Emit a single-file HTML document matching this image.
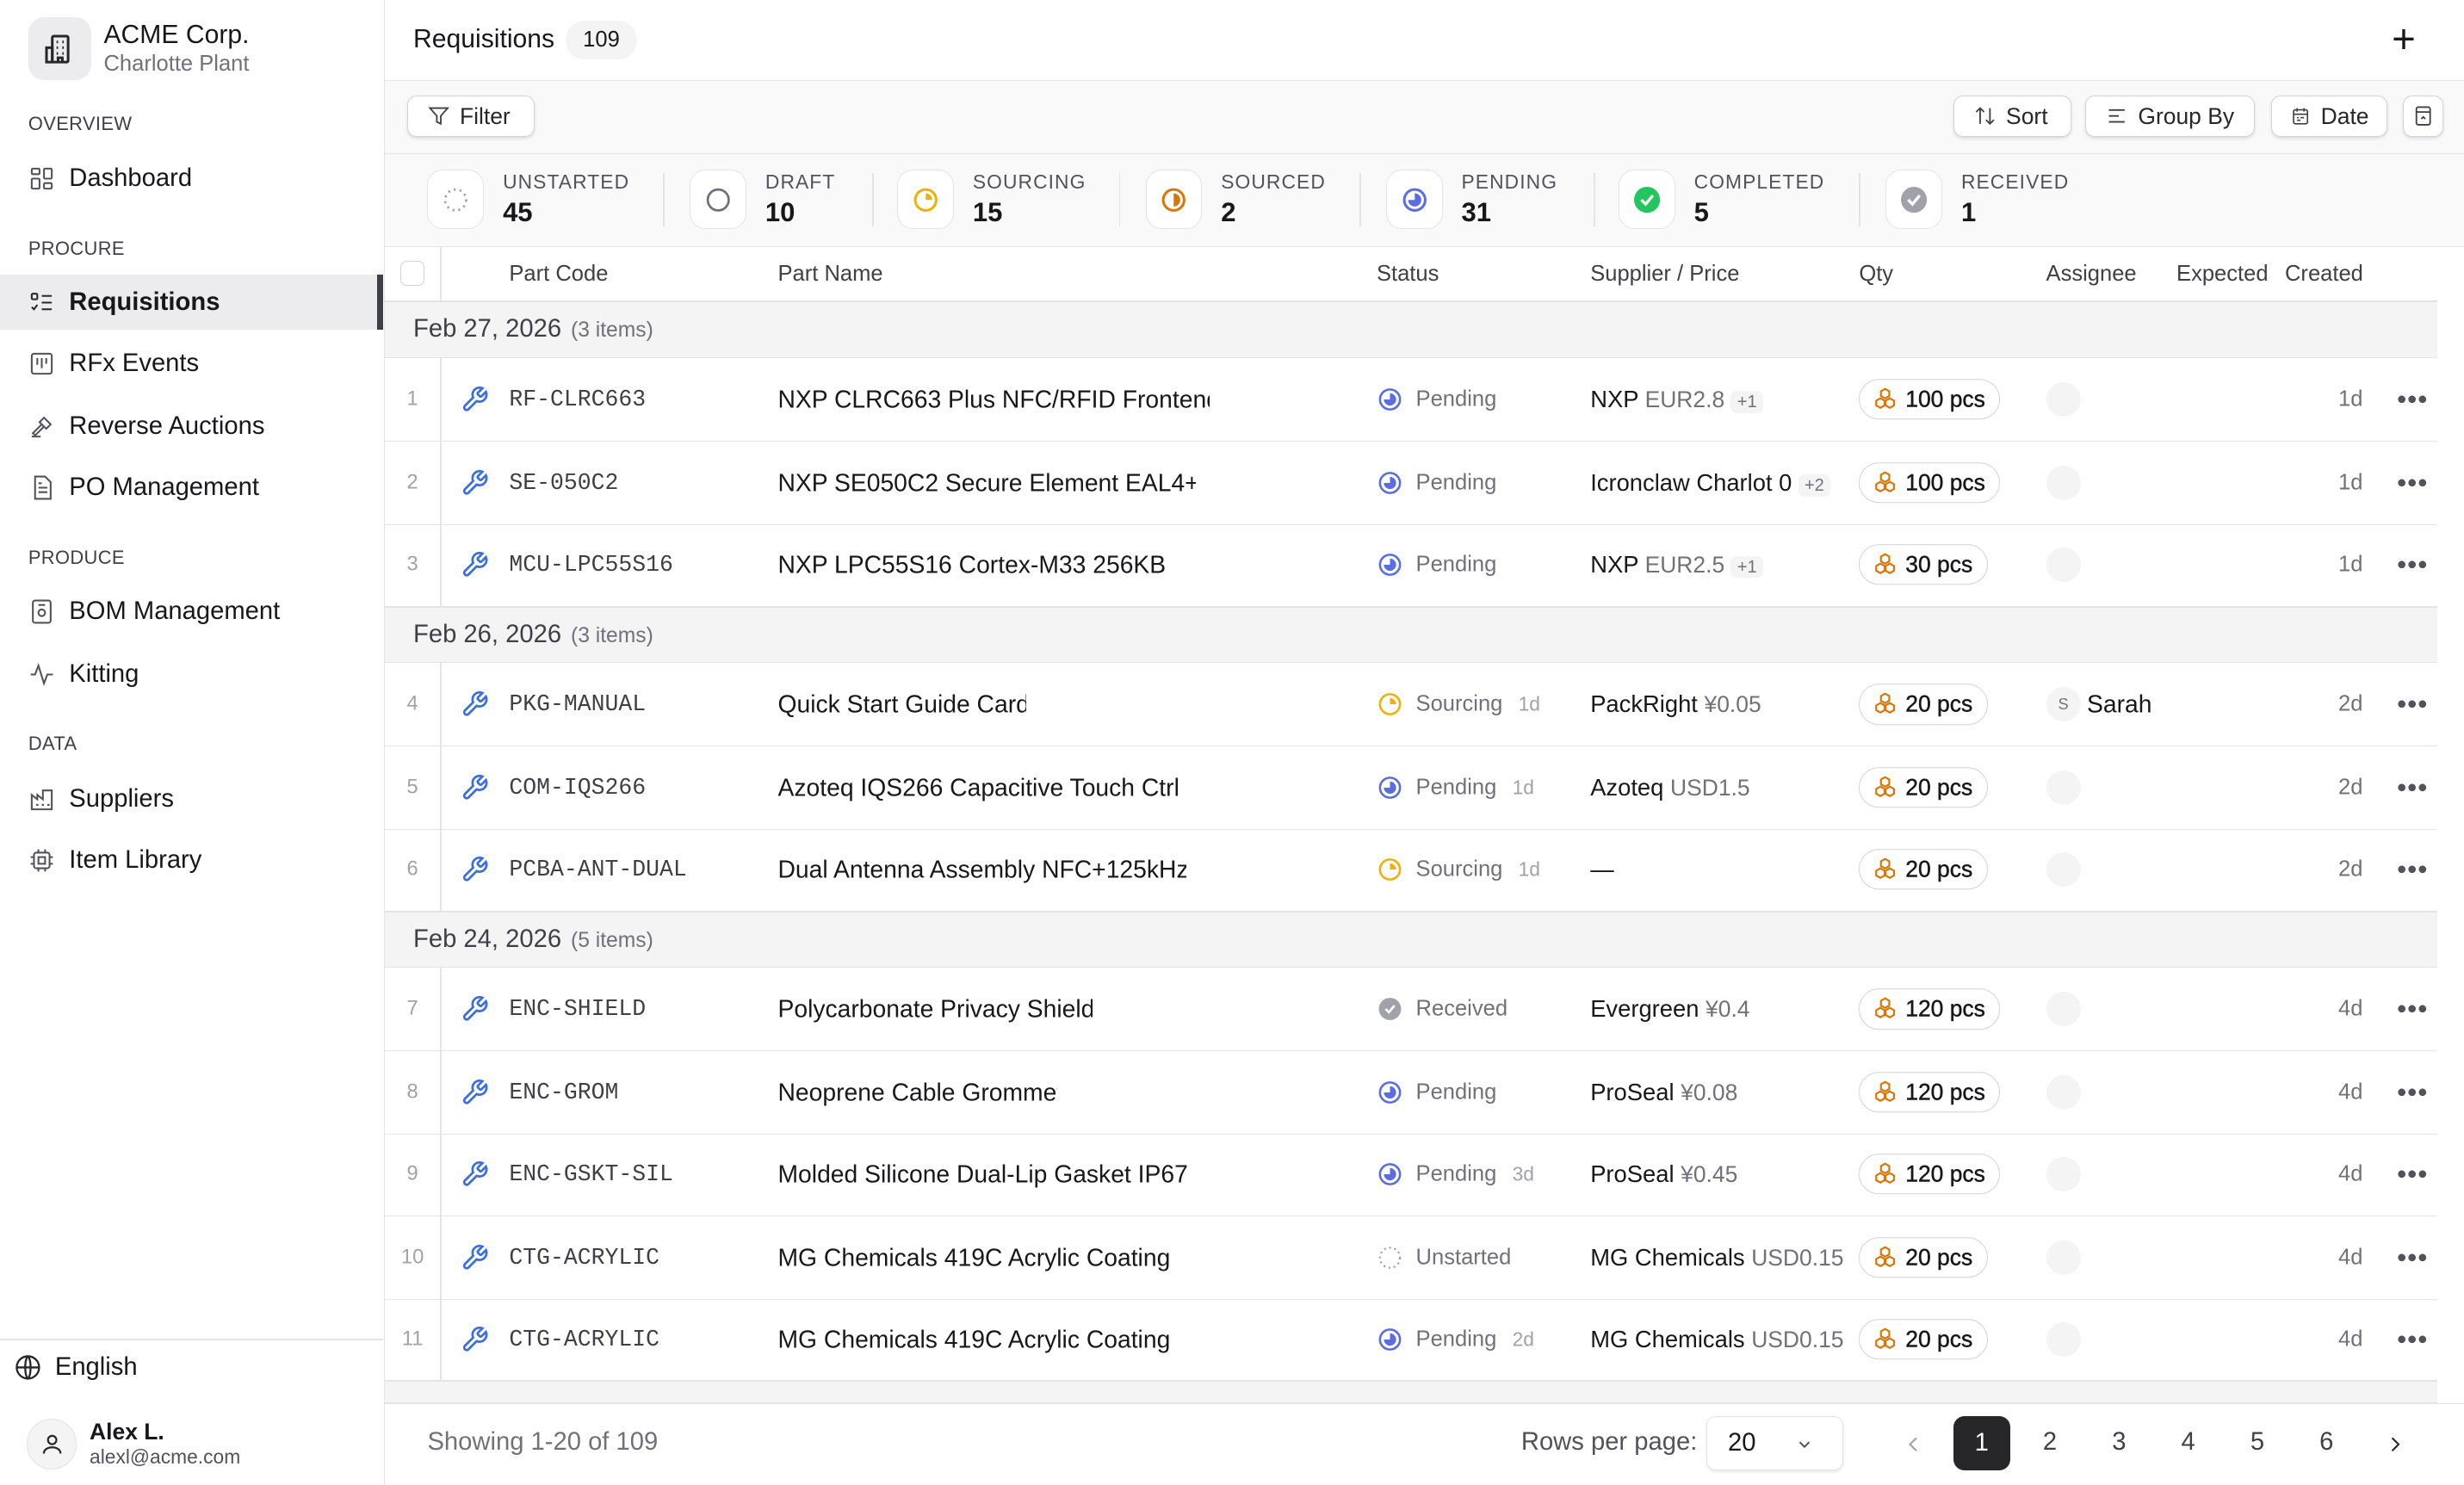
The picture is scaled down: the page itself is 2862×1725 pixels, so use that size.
<!DOCTYPE html>
<html><head><meta charset="utf-8"><style>
html{zoom:1.8253}
*{box-sizing:border-box;margin:0;padding:0}
body{width:1568px;height:945px;overflow:hidden;font-family:"Liberation Sans",sans-serif;color:#18181b;background:#fff;position:relative;font-size:15px}
.a{position:absolute}
.sb{left:0;top:0;width:245px;height:945px;border-right:1px solid #e4e4e7;background:#fff}
.sec{left:18px;font-size:12px;color:#3f3f46;letter-spacing:.2px}
.nav{left:0;width:244px;height:35px;display:flex;align-items:center;padding-left:18px;font-size:16px;color:#18181b}
.nav svg{width:17px;height:17px;margin-right:9px;stroke:#52525b;fill:none;stroke-width:1.6}
.btn{top:61px;height:26px;border:1px solid #d4d4d8;border-radius:6px;background:#fff;box-shadow:0 1px 2px rgba(0,0,0,.12);display:flex;align-items:center;padding:0 11px 0 12px;font-size:14.5px;color:#27272a}
.btn svg{width:15px;height:15px;margin-right:6px;stroke:#3f3f46;fill:none;stroke-width:1.6}
.st{top:108px;display:flex;align-items:center}
.st .ic{width:36px;height:38px;border:1px solid #e4e4e7;border-radius:10px;background:#fff;display:flex;align-items:center;justify-content:center;margin-right:12px}
.st .l{font-size:12.5px;color:#52525b;letter-spacing:.6px}
.st .n{font-size:17px;font-weight:bold;margin-top:2px}
.sep{top:110px;width:1px;height:34px;background:#e4e4e7}
.th{top:157px;height:35px;font-size:14px;color:#3f3f46;line-height:35px}
.grp{left:245px;width:1306px;height:36px;background:#f4f4f5;border-bottom:1px solid #e4e4e7;border-top:1px solid #e4e4e7;font-size:16px;color:#3f3f46;padding-left:18px;line-height:34px}
.grp span{font-size:13.5px;color:#71717a;margin-left:6px}
.row{left:245px;width:1306px;height:53px;border-bottom:1px solid #e4e4e7;font-size:15.5px}
.row>*{position:absolute;top:50%;transform:translateY(-50%);white-space:nowrap}
.idx{left:0;width:35px;text-align:center;font-size:13px;color:#a1a1aa}
.vl{left:35px;top:0!important;transform:none!important;width:1px;height:100%;background:#e4e4e7}
.wr{left:48px}
.pc{left:79px;font-family:"Liberation Mono",monospace;font-size:14.5px;color:#3f3f46}
.pn{left:250px;width:275px;overflow:hidden;color:#18181b}
.ss{left:631px;display:flex;align-items:center;font-size:14px;color:#71717a}
.ss svg{margin-right:8px}
.ss i{font-style:normal;font-size:12.5px;color:#a1a1aa;margin-left:10px}
.sp{left:767px;font-size:15px}
.sp span{color:#71717a;font-size:14.5px}
.sp b{font-weight:normal;font-size:11px;color:#71717a;background:#f4f4f5;border-radius:4px;padding:1px 4px;margin-left:4px}
.qty{left:938px;height:26px;border:1px solid #d4d4d8;border-radius:13px;padding:0 9px 0 8px;display:flex;align-items:center;font-size:14.5px;color:#18181b;-webkit-text-stroke:.25px #18181b}
.qty svg{margin-right:5px}
.av{left:1057px;width:22px;height:22px;border-radius:50%;background:#f4f4f5}
.cr{left:1243px;font-size:14px;color:#71717a}
.dots{left:1280px;font-size:11px;color:#52525b;letter-spacing:0}
.pg{top:909px;font-size:16px;color:#3f3f46}
</style></head><body>

<div class="a sb">
 <div class="a" style="left:18px;top:11px;width:40px;height:40px;border-radius:10px;background:#ececee;display:flex;align-items:center;justify-content:center">
  <svg width="22" height="22" viewBox="0 0 24 24" fill="none" stroke="#27272a" stroke-width="1.8"><rect x="7" y="3" width="11" height="18" rx="1"/><path d="M3 11h4v10H3zM10 7h1M14 7h1M10 11h1M14 11h1M10 15h1M14 15h1M11 21v-3h3v3"/></svg>
 </div>
 <div class="a" style="left:66px;top:13px;font-size:16.5px">ACME Corp.</div>
 <div class="a" style="left:66px;top:33px;font-size:14px;color:#71717a">Charlotte Plant</div>
 <div class="a sec" style="top:72px">OVERVIEW</div>
 <div class="a nav" style="top:96px"><svg viewBox="0 0 24 24"><rect x="3" y="3" width="7" height="5" rx="1"/><rect x="14" y="3" width="7" height="9" rx="1"/><rect x="3" y="12" width="7" height="9" rx="1"/><rect x="14" y="16" width="7" height="5" rx="1"/></svg>Dashboard</div>
 <div class="a sec" style="top:151px">PROCURE</div>
 <div class="a nav" style="top:175px;background:#ececee;font-weight:bold"><svg viewBox="0 0 24 24" style="stroke:#27272a"><rect x="3" y="4" width="5" height="5" rx="1"/><path d="M3 16l2 2 3-4M12 6h9M12 12h9M12 18h9"/></svg>Requisitions</div>
 <div class="a" style="left:240px;top:175px;width:4px;height:35px;background:#3f3f46"></div>
 <div class="a nav" style="top:214px"><svg viewBox="0 0 24 24"><rect x="3" y="3" width="18" height="18" rx="2"/><path d="M8 7v6M12 7v9M16 7v5"/></svg>RFx Events</div>
 <div class="a nav" style="top:254px"><svg viewBox="0 0 24 24"><path d="M14 4l6 6-4 4-6-6zM12 10l-8 8 2 2 8-8M3 21h8"/></svg>Reverse Auctions</div>
 <div class="a nav" style="top:293px"><svg viewBox="0 0 24 24"><path d="M6 2h9l5 5v15H6zM9 12h8M9 16h8M9 8h3"/></svg>PO Management</div>
 <div class="a sec" style="top:348px">PRODUCE</div>
 <div class="a nav" style="top:372px"><svg viewBox="0 0 24 24"><rect x="4" y="2" width="16" height="20" rx="2"/><circle cx="12" cy="13" r="3"/><path d="M9 6h6"/></svg>BOM Management</div>
 <div class="a nav" style="top:412px"><svg viewBox="0 0 24 24"><path d="M2 12h4l3-8 5 16 3-8h5"/></svg>Kitting</div>
 <div class="a sec" style="top:466px">DATA</div>
 <div class="a nav" style="top:491px"><svg viewBox="0 0 24 24"><path d="M3 21V8l5 4V8l5 4V4h8v17zM7 17h2M12 17h2M17 17h2"/></svg>Suppliers</div>
 <div class="a nav" style="top:530px"><svg viewBox="0 0 24 24"><rect x="5" y="5" width="14" height="14" rx="2"/><rect x="9" y="9" width="6" height="6"/><path d="M9 2v3M15 2v3M9 19v3M15 19v3M2 9h3M2 15h3M19 9h3M19 15h3"/></svg>Item Library</div>
 <div class="a" style="left:0;top:852px;width:244px;height:1px;background:#e4e4e7"></div>
 <div class="a" style="left:9px;top:861px;display:flex;align-items:center;font-size:16px"><svg width="18" height="18" viewBox="0 0 24 24" fill="none" stroke="#27272a" stroke-width="1.7" style="margin-right:8px"><circle cx="12" cy="12" r="9.5"/><path d="M2.5 12h19M12 2.5c3 3 3 16 0 19M12 2.5c-3 3-3 16 0 19"/></svg>English</div>
 <div class="a" style="left:17px;top:903px;width:32px;height:32px;border-radius:50%;background:#f4f4f5;border:1px solid #e4e4e7;display:flex;align-items:center;justify-content:center"><svg width="16" height="16" viewBox="0 0 24 24" fill="none" stroke="#27272a" stroke-width="1.8"><circle cx="12" cy="8" r="4"/><path d="M4 21c0-4 4-6 8-6s8 2 8 6"/></svg></div>
 <div class="a" style="left:57px;top:903px;font-size:14.5px;font-weight:bold">Alex L.</div>
 <div class="a" style="left:57px;top:920px;font-size:12.5px;color:#52525b">alexl@acme.com</div>
</div>

<div class="a" style="left:263px;top:16px;font-size:16.5px">Requisitions</div>
<div class="a" style="left:360px;top:13px;height:25px;padding:0 11px;border-radius:12px;background:#f4f4f5;font-size:14px;line-height:25px">109</div>
<div class="a" style="left:1522px;top:12px;font-size:26px;line-height:26px;font-weight:300">+</div>
<div class="a" style="left:245px;top:51px;width:1323px;height:47px;background:#f9f9fa;border-top:1px solid #e4e4e7;border-bottom:1px solid #e4e4e7"></div>
<div class="a btn" style="left:259px;width:81px"><svg viewBox="0 0 24 24"><path d="M3 4h18l-7 8v8l-4-2v-6z"/></svg>Filter</div>
<div class="a btn" style="left:1243px;width:75px"><svg viewBox="0 0 24 24"><path d="M7 20V4M3 8l4-4 4 4M17 4v16M13 16l4 4 4-4"/></svg>Sort</div>
<div class="a btn" style="left:1327px;width:108px"><svg viewBox="0 0 24 24"><path d="M4 6h16M4 12h10M4 18h16"/></svg>Group By</div>
<div class="a btn" style="left:1445px;width:74px"><svg viewBox="0 0 24 24"><rect x="4" y="5" width="16" height="16" rx="2"/><path d="M4 10h16M8 3v4M16 3v4M8 14h2M12 14h4M8 17h4"/></svg>Date</div>
<div class="a btn" style="left:1529px;width:26px;padding:0;justify-content:center"><svg viewBox="0 0 24 24" style="margin:0"><rect x="5" y="3" width="14" height="18" rx="2"/><path d="M5 8h14M10 15l2-2 2 2"/></svg></div>

<div class="a" style="left:245px;top:98px;width:1323px;height:59px;background:#f9f9fa;border-bottom:1px solid #e4e4e7"></div>
<div class="a st" style="left:272px"><div class="ic"><svg width="20" height="20" viewBox="0 0 24 24" fill="none" stroke="#a1a1aa" stroke-width="1.8" stroke-dasharray="1.5 3"><circle cx="12" cy="12" r="8"/></svg></div><div><div class="l">UNSTARTED</div><div class="n">45</div></div></div>
<div class="a sep" style="left:422px"></div>
<div class="a st" style="left:439px"><div class="ic"><svg width="20" height="20" viewBox="0 0 24 24" fill="none" stroke="#71717a" stroke-width="1.8"><circle cx="12" cy="12" r="8"/></svg></div><div><div class="l">DRAFT</div><div class="n">10</div></div></div>
<div class="a sep" style="left:555px"></div>
<div class="a st" style="left:571px"><div class="ic"><svg width="20" height="20" viewBox="0 0 24 24"><circle cx="12" cy="12" r="8" fill="none" stroke="#eab308" stroke-width="2"/><path d="M12 7a5 5 0 0 1 5 5h-5z" fill="#eab308"/></svg></div><div><div class="l">SOURCING</div><div class="n">15</div></div></div>
<div class="a sep" style="left:712px"></div>
<div class="a st" style="left:729px"><div class="ic"><svg width="20" height="20" viewBox="0 0 24 24"><circle cx="12" cy="12" r="8" fill="none" stroke="#d97706" stroke-width="2"/><path d="M12 7a5 5 0 0 1 0 10z" fill="#d97706"/></svg></div><div><div class="l">SOURCED</div><div class="n">2</div></div></div>
<div class="a sep" style="left:865px"></div>
<div class="a st" style="left:882px"><div class="ic"><svg width="20" height="20" viewBox="0 0 24 24"><circle cx="12" cy="12" r="8" fill="none" stroke="#5b6ee1" stroke-width="2"/><path d="M12 7a5 5 0 1 1-5 5h5z" fill="#5b6ee1"/></svg></div><div><div class="l">PENDING</div><div class="n">31</div></div></div>
<div class="a sep" style="left:1014px"></div>
<div class="a st" style="left:1030px"><div class="ic"><svg width="22" height="22" viewBox="0 0 24 24"><circle cx="12" cy="12" r="9" fill="#22c55e"/><path d="M8 12l3 3 5-6" fill="none" stroke="#fff" stroke-width="2"/></svg></div><div><div class="l">COMPLETED</div><div class="n">5</div></div></div>
<div class="a sep" style="left:1183px"></div>
<div class="a st" style="left:1200px"><div class="ic"><svg width="22" height="22" viewBox="0 0 24 24"><circle cx="12" cy="12" r="9" fill="#a1a1aa"/><path d="M8 12l3 3 5-6" fill="none" stroke="#fff" stroke-width="2"/></svg></div><div><div class="l">RECEIVED</div><div class="n">1</div></div></div>

<div class="a" style="left:245px;top:157px;width:1306px;height:35px;border-bottom:1px solid #e4e4e7"></div>
<div class="a" style="left:280px;top:157px;width:1px;height:35px;background:#e4e4e7"></div>
<div class="a" style="left:255px;top:166px;width:15px;height:16px;border:1px solid #d4d4d8;border-radius:4px;background:#fff"></div>
<div class="a th" style="left:324px">Part Code</div>
<div class="a th" style="left:495px">Part Name</div>
<div class="a th" style="left:876px">Status</div>
<div class="a th" style="left:1012px">Supplier / Price</div>
<div class="a th" style="left:1183px">Qty</div>
<div class="a th" style="left:1302px">Assignee</div>
<div class="a th" style="left:1385px">Expected</div>
<div class="a th" style="left:1454px">Created</div>

<svg width="0" height="0" style="position:absolute"><defs>
<symbol id="wr" viewBox="0 0 24 24"><path d="M14.7 6.3a1 1 0 0 0 0 1.4l1.6 1.6a1 1 0 0 0 1.4 0l3.8-3.8a6 6 0 0 1-7.9 7.9l-6.9 6.9a2.1 2.1 0 0 1-3-3l6.9-6.9a6 6 0 0 1 7.9-7.9z" fill="none" stroke="#3b6fe0" stroke-width="2"/></symbol>
<symbol id="pe" viewBox="0 0 24 24"><circle cx="12" cy="12" r="9" fill="none" stroke="#5b6ee1" stroke-width="2"/><path d="M12 6.5a5.5 5.5 0 1 1-5.5 5.5h5.5z" fill="#5b6ee1"/></symbol>
<symbol id="so" viewBox="0 0 24 24"><circle cx="12" cy="12" r="9" fill="none" stroke="#eab308" stroke-width="2"/><path d="M12 6.5a5.5 5.5 0 0 1 5.5 5.5h-5.5z" fill="#eab308"/></symbol>
<symbol id="re" viewBox="0 0 24 24"><circle cx="12" cy="12" r="10" fill="#a1a1aa"/><path d="M8 12l3 3 5-6" fill="none" stroke="#fff" stroke-width="2"/></symbol>
<symbol id="un" viewBox="0 0 24 24"><circle cx="12" cy="12" r="9" fill="none" stroke="#a1a1aa" stroke-width="1.8" stroke-dasharray="1.6 3"/></symbol>
<symbol id="bx" viewBox="0 0 24 24"><g fill="none" stroke="#d97706" stroke-width="1.8"><path d="M12 2l4 2.3v4.5l-4 2.3-4-2.3V4.3z"/><path d="M7.5 11l4 2.3v4.5l-4 2.3-4-2.3v-4.5z"/><path d="M16.5 11l4 2.3v4.5l-4 2.3-4-2.3v-4.5z"/></g></symbol>
</defs></svg>

<div class="a grp" style="top:192px">Feb 27, 2026<span>(3 items)</span></div>
<div class="a grp" style="top:386px">Feb 26, 2026<span>(3 items)</span></div>
<div class="a grp" style="top:580px">Feb 24, 2026<span>(5 items)</span></div>
<div class="a grp" style="top:879px;height:14px"></div>

<div class="a row" style="top:228px"><div class="idx">1</div><div class="vl"></div><svg class="wr" width="18" height="18"><use href="#wr"/></svg><div class="pc">RF-CLRC663</div><div class="pn" style="width:275px">NXP CLRC663 Plus NFC/RFID Frontend</div><div class="ss"><svg width="17" height="17"><use href="#pe"/></svg>Pending</div><div class="sp">NXP <span>EUR2.8</span><b>+1</b></div><div class="qty"><svg width="16" height="16"><use href="#bx"/></svg>100 pcs</div><div class="av"></div><div class="cr">1d</div><div class="dots">●●●</div></div>
<div class="a row" style="top:281px"><div class="idx">2</div><div class="vl"></div><svg class="wr" width="18" height="18"><use href="#wr"/></svg><div class="pc">SE-050C2</div><div class="pn" style="width:266px">NXP SE050C2 Secure Element EAL4+</div><div class="ss"><svg width="17" height="17"><use href="#pe"/></svg>Pending</div><div class="sp">Icronclaw Charlot 0<b>+2</b></div><div class="qty"><svg width="16" height="16"><use href="#bx"/></svg>100 pcs</div><div class="av"></div><div class="cr">1d</div><div class="dots">●●●</div></div>
<div class="a row" style="top:333px"><div class="idx">3</div><div class="vl"></div><svg class="wr" width="18" height="18"><use href="#wr"/></svg><div class="pc">MCU-LPC55S16</div><div class="pn" style="width:248px">NXP LPC55S16 Cortex-M33 256KB</div><div class="ss"><svg width="17" height="17"><use href="#pe"/></svg>Pending</div><div class="sp">NXP <span>EUR2.5</span><b>+1</b></div><div class="qty"><svg width="16" height="16"><use href="#bx"/></svg>30 pcs</div><div class="av"></div><div class="cr">1d</div><div class="dots">●●●</div></div>

<div class="a row" style="top:422px"><div class="idx">4</div><div class="vl"></div><svg class="wr" width="18" height="18"><use href="#wr"/></svg><div class="pc">PKG-MANUAL</div><div class="pn" style="width:158px">Quick Start Guide Card</div><div class="ss"><svg width="17" height="17"><use href="#so"/></svg>Sourcing<i>1d</i></div><div class="sp">PackRight <span>¥0.05</span></div><div class="qty"><svg width="16" height="16"><use href="#bx"/></svg>20 pcs</div><div class="av" style="font-size:10px;color:#71717a;text-align:center;line-height:22px">S</div><div style="left:1083px">Sarah</div><div class="cr">2d</div><div class="dots">●●●</div></div>
<div class="a row" style="top:475px"><div class="idx">5</div><div class="vl"></div><svg class="wr" width="18" height="18"><use href="#wr"/></svg><div class="pc">COM-IQS266</div><div class="pn" style="width:260px">Azoteq IQS266 Capacitive Touch Ctrl</div><div class="ss"><svg width="17" height="17"><use href="#pe"/></svg>Pending<i>1d</i></div><div class="sp">Azoteq <span>USD1.5</span></div><div class="qty"><svg width="16" height="16"><use href="#bx"/></svg>20 pcs</div><div class="av"></div><div class="cr">2d</div><div class="dots">●●●</div></div>
<div class="a row" style="top:527px"><div class="idx">6</div><div class="vl"></div><svg class="wr" width="18" height="18"><use href="#wr"/></svg><div class="pc">PCBA-ANT-DUAL</div><div class="pn" style="width:260px">Dual Antenna Assembly NFC+125kHz</div><div class="ss"><svg width="17" height="17"><use href="#so"/></svg>Sourcing<i>1d</i></div><div class="sp">—</div><div class="qty"><svg width="16" height="16"><use href="#bx"/></svg>20 pcs</div><div class="av"></div><div class="cr">2d</div><div class="dots">●●●</div></div>

<div class="a row" style="top:616px"><div class="idx">7</div><div class="vl"></div><svg class="wr" width="18" height="18"><use href="#wr"/></svg><div class="pc">ENC-SHIELD</div><div class="pn" style="width:200px">Polycarbonate Privacy Shield</div><div class="ss"><svg width="17" height="17"><use href="#re"/></svg>Received</div><div class="sp">Evergreen <span>¥0.4</span></div><div class="qty"><svg width="16" height="16"><use href="#bx"/></svg>120 pcs</div><div class="av"></div><div class="cr">4d</div><div class="dots">●●●</div></div>
<div class="a row" style="top:669px"><div class="idx">8</div><div class="vl"></div><svg class="wr" width="18" height="18"><use href="#wr"/></svg><div class="pc">ENC-GROM</div><div class="pn" style="width:178px">Neoprene Cable Grommet</div><div class="ss"><svg width="17" height="17"><use href="#pe"/></svg>Pending</div><div class="sp">ProSeal <span>¥0.08</span></div><div class="qty"><svg width="16" height="16"><use href="#bx"/></svg>120 pcs</div><div class="av"></div><div class="cr">4d</div><div class="dots">●●●</div></div>
<div class="a row" style="top:721px"><div class="idx">9</div><div class="vl"></div><svg class="wr" width="18" height="18"><use href="#wr"/></svg><div class="pc">ENC-GSKT-SIL</div><div class="pn" style="width:263px">Molded Silicone Dual-Lip Gasket IP67</div><div class="ss"><svg width="17" height="17"><use href="#pe"/></svg>Pending<i>3d</i></div><div class="sp">ProSeal <span>¥0.45</span></div><div class="qty"><svg width="16" height="16"><use href="#bx"/></svg>120 pcs</div><div class="av"></div><div class="cr">4d</div><div class="dots">●●●</div></div>
<div class="a row" style="top:774px"><div class="idx">10</div><div class="vl"></div><svg class="wr" width="18" height="18"><use href="#wr"/></svg><div class="pc">CTG-ACRYLIC</div><div class="pn" style="width:251px">MG Chemicals 419C Acrylic Coating</div><div class="ss"><svg width="17" height="17"><use href="#un"/></svg>Unstarted</div><div class="sp">MG Chemicals <span>USD0.15</span></div><div class="qty"><svg width="16" height="16"><use href="#bx"/></svg>20 pcs</div><div class="av"></div><div class="cr">4d</div><div class="dots">●●●</div></div>
<div class="a row" style="top:826px"><div class="idx">11</div><div class="vl"></div><svg class="wr" width="18" height="18"><use href="#wr"/></svg><div class="pc">CTG-ACRYLIC</div><div class="pn" style="width:251px">MG Chemicals 419C Acrylic Coating</div><div class="ss"><svg width="17" height="17"><use href="#pe"/></svg>Pending<i>2d</i></div><div class="sp">MG Chemicals <span>USD0.15</span></div><div class="qty"><svg width="16" height="16"><use href="#bx"/></svg>20 pcs</div><div class="av"></div><div class="cr">4d</div><div class="dots">●●●</div></div>

<div class="a" style="left:245px;top:893px;width:1323px;height:52px;background:#fff;border-top:1px solid #e4e4e7"></div>
<div class="a" style="left:272px;top:909px;font-size:16px;color:#71717a">Showing 1-20 of 109</div>
<div class="a" style="left:968px;top:909px;font-size:16px;color:#52525b">Rows per page:</div>
<div class="a" style="left:1086px;top:901px;width:87px;height:35px;border:1px solid #e4e4e7;border-radius:6px;box-shadow:0 1px 2px rgba(0,0,0,.1);font-size:16px;padding:8px 13px">20<svg width="12" height="12" viewBox="0 0 24 24" fill="none" stroke="#52525b" stroke-width="2.2" style="position:absolute;right:18px;top:12px"><path d="M6 9l6 6 6-6"/></svg></div>
<svg class="a" style="left:1211px;top:912px" width="14" height="14" viewBox="0 0 24 24" fill="none" stroke="#a1a1aa" stroke-width="2"><path d="M15 5l-7 7 7 7"/></svg>
<div class="a" style="left:1243px;top:901px;width:36px;height:35px;border-radius:7px;background:#27272a;color:#fff;font-size:16px;text-align:center;line-height:35px">1</div>
<div class="a pg" style="left:1300px">2</div>
<div class="a pg" style="left:1344px">3</div>
<div class="a pg" style="left:1388px">4</div>
<div class="a pg" style="left:1432px">5</div>
<div class="a pg" style="left:1476px">6</div>
<svg class="a" style="left:1517px;top:912px" width="14" height="14" viewBox="0 0 24 24" fill="none" stroke="#27272a" stroke-width="2"><path d="M9 5l7 7-7 7"/></svg>
</body></html>
